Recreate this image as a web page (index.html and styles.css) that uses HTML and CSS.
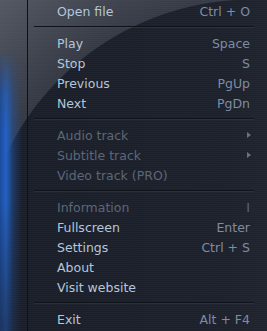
FILE: index.html
```html
<!DOCTYPE html>
<html lang="en">
<head>
    <meta charset="UTF-8">
    <meta name="viewport" content="width=device-width, initial-scale=1.0">
    <title>Player Menu</title>
    <link rel="stylesheet" href="styles.css">
</head>
<body>
    <div class="menu">
        <div class="rail"></div>
        <ul class="items">
            <li class="item"><span class="label">Open file</span><span class="key">Ctrl + O</span></li>
            <li class="sep"></li>
            <li class="item"><span class="label">Play</span><span class="key">Space</span></li>
            <li class="item"><span class="label">Stop</span><span class="key">S</span></li>
            <li class="item"><span class="label">Previous</span><span class="key">PgUp</span></li>
            <li class="item"><span class="label">Next</span><span class="key">PgDn</span></li>
            <li class="sep"></li>
            <li class="item off"><span class="label">Audio track</span><span class="arrow"></span></li>
            <li class="item off"><span class="label">Subtitle track</span><span class="arrow"></span></li>
            <li class="item off"><span class="label">Video track (PRO)</span></li>
            <li class="sep"></li>
            <li class="item off"><span class="label">Information</span><span class="key">I</span></li>
            <li class="item"><span class="label">Fullscreen</span><span class="key">Enter</span></li>
            <li class="item"><span class="label">Settings</span><span class="key">Ctrl + S</span></li>
            <li class="item"><span class="label">About</span></li>
            <li class="item"><span class="label">Visit website</span></li>
            <li class="sep"></li>
            <li class="item"><span class="label">Exit</span><span class="key">Alt + F4</span></li>
        </ul>
    </div>
</body>
</html>
```

FILE: styles.css
```css
html, body {
    margin: 0;
    height: 100%;
}
body {
    background: #1b1f29;
    font-family: "DejaVu Sans", Verdana, sans-serif;
    font-size: 12.5px;
    overflow: hidden;
}
.menu {
    display: flex;
    width: 267px;
    height: 331px;
    background:
        radial-gradient(circle 600px at 252px 272px, transparent 272px, rgba(200, 210, 225, 0.15) 273px, rgba(210, 215, 225, 0.33) 380px),
        repeating-linear-gradient(to bottom, rgba(255, 255, 255, 0.018) 0 1px, transparent 1px 2px),
        linear-gradient(to right, #1a1e28, #1d212c 85%, #20242e);
}
.rail {
    position: relative;
    width: 27px;
    flex: none;
    border-right: 1px solid #0d1016;
}
.rail::before {
    content: "";
    position: absolute;
    inset: 0;
    background: linear-gradient(to right, #1c4c9c, #2462c4 6px, rgba(34, 86, 170, 0.45) 13px, rgba(20, 30, 50, 0) 22px);
    -webkit-mask-image: linear-gradient(to bottom, transparent 50px, rgba(0, 0, 0, 0.8) 95px, #000 130px, #000 200px, rgba(0, 0, 0, 0.45) 331px);
    mask-image: linear-gradient(to bottom, transparent 50px, rgba(0, 0, 0, 0.8) 95px, #000 130px, #000 200px, rgba(0, 0, 0, 0.45) 331px);
}
.items {
    list-style: none;
    margin: 0;
    padding: 1px 0 0;
    flex: 1;
}
.item {
    display: flex;
    align-items: center;
    height: 20px;
    padding: 0 17px 0 29px;
    color: #b5c6da;
}
.label {
    flex: 1;
    white-space: nowrap;
}
.key {
    color: #7d8ca3;
    white-space: nowrap;
}
.item.off,
.item.off .key {
    color: #5c6777;
}
.arrow {
    width: 0;
    height: 0;
    margin-right: -1px;
    border-top: 3px solid transparent;
    border-bottom: 3px solid transparent;
    border-left: 4px solid #667385;
}
.sep {
    height: 12px;
    margin: 0 13px 0 6px;
    background: linear-gradient(to bottom, transparent 5px, #0f131a 5px, #0f131a 6px, rgba(70, 78, 92, 0.35) 6px, rgba(70, 78, 92, 0.35) 7px, transparent 7px);
}
```
